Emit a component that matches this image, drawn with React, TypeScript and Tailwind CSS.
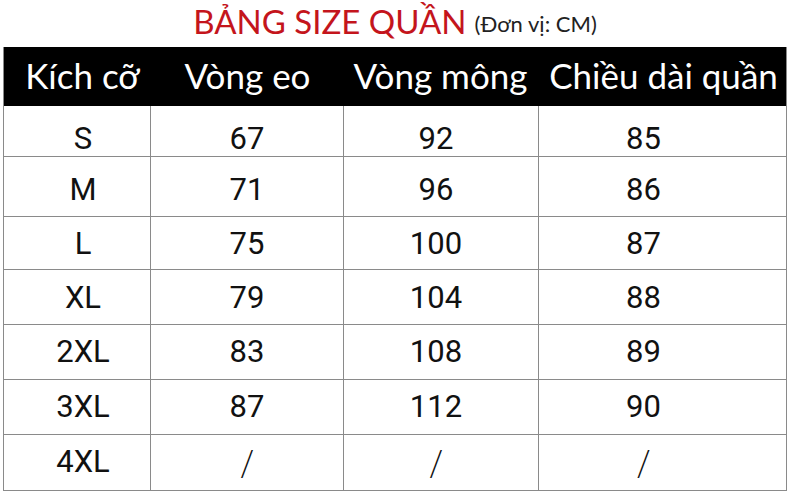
const headers = ["Kích cỡ", "Vòng eo", "Vòng mông", "Chiều dài quần"]

const rows = [
  { size: "S", waist: "67", hip: "92", length: "85", h: "h-[51px]", pt: "pt-[10px]" },
  { size: "M", waist: "71", hip: "96", length: "86", h: "h-[60px]", pt: "pt-[8px]" },
  { size: "L", waist: "75", hip: "100", length: "87", h: "h-[53px]", pt: "pt-[3px]" },
  { size: "XL", waist: "79", hip: "104", length: "88", h: "h-[55px]", pt: "pt-[3px]" },
  { size: "2XL", waist: "83", hip: "108", length: "89", h: "h-[55px]", pt: "pt-[1px]" },
  { size: "3XL", waist: "87", hip: "112", length: "90", h: "h-[55px]", pt: "pt-[1px]" },
  { size: "4XL", waist: "/", hip: "/", length: "/", h: "h-[56px]", pt: "pt-0" },
]

const cols = "grid grid-cols-[147px_193px_195px_249px]"

// the slash in the 4XL row is thin and steep
const cell = (v: string) =>
  v === "/" ? <span className="font-['Noto_Sans',sans-serif] font-extralight text-[39px] leading-none">{v}</span> : v

export default function App() {
  return (
    <div className="w-[790px] h-[491px] bg-white overflow-hidden">
      <div className="h-[47px] flex items-center justify-center gap-[8px] pb-[4px]">
        <span className="text-[#c4151c] text-[33px] font-['Lato',sans-serif] leading-none">BẢNG SIZE QUẦN</span>
        <span className="text-[#222] text-[22px] font-['Lato',sans-serif] leading-none pt-[4px]">(Đơn vị: CM)</span>
      </div>

      <div className="ml-[3px] w-[784px] border-l border-r border-[#8a8a8a]">
        <div className={`${cols} h-[59px] bg-black text-white font-['Lato',sans-serif] text-[35px]`}>
          {headers.map((t, i) => (
            <div key={t} className={`flex items-center justify-center pb-[2px] ${i === 0 ? "pl-[10px]" : ""} ${i === 2 ? "pr-[2px]" : ""}`}>
              {t}
            </div>
          ))}
        </div>

        {rows.map((r) => (
          <div key={r.size} className={`${cols} ${r.h} border-b border-[#8a8a8a] text-[#111] font-['Roboto',sans-serif] text-[31px]`}>
            <div className={`flex items-center justify-center pl-[12px] ${r.pt} border-r border-[#8a8a8a]`}>{r.size}</div>
            <div className={`flex items-center justify-center ${r.pt} border-r border-[#8a8a8a]`}>{cell(r.waist)}</div>
            <div className={`flex items-center justify-center pr-[10px] ${r.pt} border-r border-[#8a8a8a]`}>{cell(r.hip)}</div>
            <div className={`flex items-center justify-center pr-[40px] ${r.pt}`}>{cell(r.length)}</div>
          </div>
        ))}
      </div>
    </div>
  )
}
